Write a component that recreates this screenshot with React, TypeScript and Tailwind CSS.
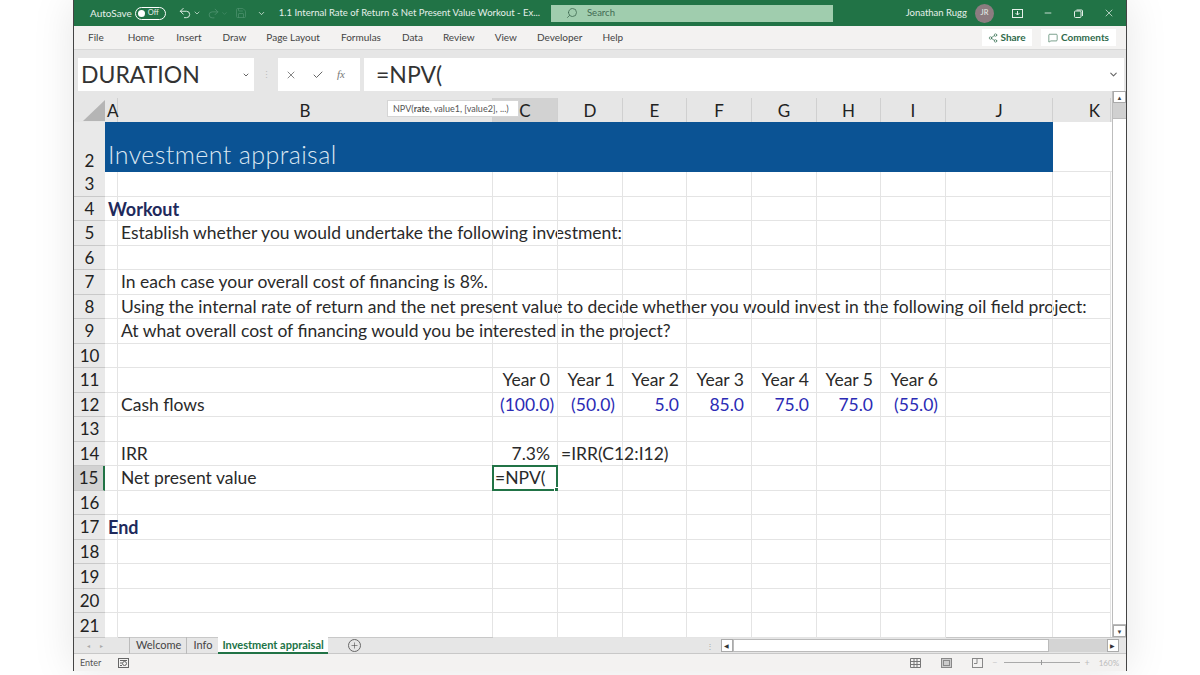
import { Check, ChevronDown, MessageSquare, Minus, Plus, Redo2, Save, Search, Share2, Undo2, X } from "lucide-react";

const font = "font-['Lato','Liberation_Sans',sans-serif]";

const columns = [
  { label: "A", width: "w-[13px]", text: "justify-start pl-[2px]" },
  { label: "B", width: "w-[375px]", text: "justify-center" },
  { label: "C", width: "w-[65px]", text: "justify-center" },
  { label: "D", width: "w-[65px]", text: "justify-center" },
  { label: "E", width: "w-[64px]", text: "justify-center" },
  { label: "F", width: "w-[65px]", text: "justify-center" },
  { label: "G", width: "w-[65px]", text: "justify-center" },
  { label: "H", width: "w-[64px]", text: "justify-center" },
  { label: "I", width: "w-[65px]", text: "justify-center" },
  { label: "J", width: "w-[107px]", text: "justify-center" },
  { label: "K", width: "w-[58px]", text: "justify-end pr-[10px]" },
];

const years = ["Year 0", "Year 1", "Year 2", "Year 3", "Year 4", "Year 5", "Year 6"];
const flows = ["(100.0)", "(50.0)", "5.0", "85.0", "75.0", "75.0", "(55.0)"];

type RowData = { n: number; a?: string; b?: string; active?: boolean; cells?: string[]; blue?: boolean; extra?: React.ReactNode };

const rows: RowData[] = [
  { n: 3 },
  { n: 4, a: "Workout" },
  { n: 5, b: "Establish whether you would undertake the following investment:" },
  { n: 6 },
  { n: 7, b: "In each case your overall cost of financing is 8%." },
  { n: 8, b: "Using the internal rate of return and the net present value to decide whether you would invest in the following oil field project:" },
  { n: 9, b: "At what overall cost of financing would you be interested in the project?" },
  { n: 10 },
  { n: 11, cells: years },
  { n: 12, b: "Cash flows", cells: flows, blue: true },
  { n: 13 },
  { n: 14, b: "IRR", cells: ["7.3%"], extra: "=IRR(C12:I12)" },
  { n: 15, b: "Net present value", active: true },
  { n: 16 },
  { n: 17, a: "End" },
  { n: 18 },
  { n: 19 },
  { n: 20 },
  { n: 21 },
];

const widths = ["w-[65px]", "w-[65px]", "w-[64px]", "w-[65px]", "w-[65px]", "w-[64px]", "w-[65px]"];

function SheetRow({ row }: { row: RowData }) {
  return (
    <div className="flex h-[24.53px] shrink-0">
      <div className={`w-[31px] shrink-0 border-b border-[#c9c9c9] flex items-center justify-center text-[17px] leading-none text-[#222] ${row.active ? "bg-[#d2d2d2] border-r-2 border-r-[#217346]" : "bg-[#e9e9e9]"}`}>
        {row.n}
      </div>
      <div className="w-[13px] shrink-0 border-r border-b border-[#e4e4e4] relative">
        {row.a && <span className="absolute left-[3px] top-[1px] whitespace-nowrap text-[18px] font-bold leading-[22px] text-[#1f2a5c]">{row.a}</span>}
      </div>
      <div className="w-[375px] shrink-0 border-r border-b border-[#e4e4e4] px-[3px] text-[17.5px] leading-[23px] whitespace-nowrap text-[#2a2a2a]">
        {row.b}
      </div>
      {widths.map((w, i) => (
        <div key={i} className={`${w} shrink-0 border-r border-b border-[#e4e4e4] px-[7px] text-right text-[17.5px] leading-[23px] whitespace-nowrap ${row.blue ? "text-[#2b2bb5]" : "text-[#2a2a2a]"} relative`}>
          {row.cells?.[i]}
          {i === 1 && row.extra && <span className="absolute left-[3px] top-0">{row.extra}</span>}
          {i === 0 && row.active && (
            <div className="absolute -left-[1px] -top-[1px] w-[66px] h-[26px] border-2 border-[#217346] bg-white text-left text-[17.5px] leading-[22px] text-[#2a2a2a] pl-[1px]">
              =NPV(
              <span className="absolute -right-[3px] -bottom-[3px] w-[5px] h-[5px] bg-[#217346] border border-white" />
            </div>
          )}
        </div>
      ))}
      <div className="w-[107px] shrink-0 border-r border-b border-[#e4e4e4]" />
      <div className="w-[58px] shrink-0 border-r border-b border-[#e4e4e4]" />
    </div>
  );
}

function TitleBar() {
  return (
    <div className="h-[26px] shrink-0 bg-[#217346] flex items-center text-[#e6f0ea] text-[9.5px] pl-[16px]">
      <span className="text-[10px]">AutoSave</span>
      <span className="ml-[3px] w-[31px] h-[13px] rounded-full border border-white flex items-center pl-[2px] gap-[3px] text-[7.5px]">
        <span className="w-[7px] h-[7px] rounded-full bg-white" />
        Off
      </span>
      <Undo2 size={14} className="ml-[12px]" strokeWidth={1.6} />
      <ChevronDown size={8} className="ml-[1px]" />
      <Redo2 size={13} className="ml-[6px] text-[#4f9270]" strokeWidth={1.5} />
      <ChevronDown size={7} className="ml-[1px] text-[#4f9270]" />
      <Save size={12} className="ml-[7px] text-[#4f9270]" strokeWidth={1.4} />
      <ChevronDown size={9} className="ml-[10px]" />
      <span className="ml-[13px] whitespace-nowrap">1.1 Internal Rate of Return &amp; Net Present Value Workout  -  Ex...</span>
      <div className="ml-[11px] w-[282px] h-[17px] bg-[#a0cdae] flex items-center text-[#3f6a52] pl-[15px] gap-[9px]">
        <Search size={12} className="-scale-x-100" strokeWidth={1.6} />
        <span>Search</span>
      </div>
      <span className="ml-auto">Jonathan Rugg</span>
      <span className="ml-[8px] w-[19px] h-[19px] rounded-full bg-[#8c7c80] text-[7.5px] flex items-center justify-center">JR</span>
      <svg className="ml-[18px]" width="11" height="9" viewBox="0 0 11 9" fill="none" stroke="currentColor"><rect x="0.5" y="0.5" width="10" height="8" /><path d="M5.5 2v4M3.5 4l2 2 2-2" /></svg>
      <Minus size={10} className="ml-[20px]" />
      <svg className="ml-[21px]" width="9" height="9" viewBox="0 0 9 9" fill="none" stroke="currentColor"><rect x="0.5" y="2" width="6.5" height="6.5" rx="1" /><path d="M2.5 1h5a1 1 0 0 1 1 1v5" /></svg>
      <X size={12} className="ml-[20px] mr-[11px]" strokeWidth={1.4} />
    </div>
  );
}

function RibbonTabs() {
  const tabs = [
    ["File", "ml-[14px]"],
    ["Home", "ml-[24px]"],
    ["Insert", "ml-[22px]"],
    ["Draw", "ml-[21px]"],
    ["Page Layout", "ml-[20px]"],
    ["Formulas", "ml-[21px]"],
    ["Data", "ml-[21px]"],
    ["Review", "ml-[20px]"],
    ["View", "ml-[20px]"],
    ["Developer", "ml-[20px]"],
    ["Help", "ml-[20px]"],
  ];
  return (
    <div className="h-[24px] shrink-0 bg-[#f3f2f1] border-b border-[#d8d8d8] flex items-center text-[10px] text-[#444]">
      {tabs.map(([t, m]) => (
        <span key={t} className={m}>{t}</span>
      ))}
      <div className="ml-auto mr-[4px] h-[17px] w-[50px] bg-white flex items-center justify-center gap-[2px] text-[#2f6a4c] font-bold">
        <Share2 size={10} strokeWidth={1.5} /> Share
      </div>
      <div className="ml-[5px] mr-[10px] h-[17px] w-[75px] bg-white flex items-center justify-center gap-[3px] text-[#2f6a4c] font-bold">
        <MessageSquare size={10} strokeWidth={1.5} /> Comments
      </div>
    </div>
  );
}

function FormulaBar() {
  return (
    <div className="h-[41px] shrink-0 bg-[#e6e6e6] pt-[8px] flex pl-[4px]">
      <div className="w-[176px] h-[33px] bg-white flex items-center justify-between px-[3px] text-[23px] text-[#333] font-['Open_Sans','Liberation_Sans',sans-serif]">
        <span className={font}>DURATION</span>
        <ChevronDown size={8} strokeWidth={3} className="mr-[1px] text-[#666]" />
      </div>
      <div className="w-[24px] flex items-center justify-center text-[#bbb] text-[9px]">⋮</div>
      <div className="w-[82px] h-[33px] bg-white flex items-center pl-[7px] text-[#555]">
        <X size={12} strokeWidth={1.4} />
        <Check size={12} strokeWidth={1.8} className="ml-[15px]" />
        <span className="ml-[13px] italic text-[11px] font-['Liberation_Serif',serif] text-[#777]">fx</span>
      </div>
      <div className="ml-[4px] flex-1 h-[33px] mr-[2px] bg-white flex items-center pl-[12px] pr-[5px] text-[23px] text-[#333] justify-between">
        <span className="-mt-[1px]">=NPV(</span>
        <ChevronDown size={11} strokeWidth={2.4} className="text-[#666]" />
      </div>
    </div>
  );
}

function ColumnHeaders() {
  return (
    <div className="h-[31px] shrink-0 bg-[#e6e6e6] flex relative">
      <div className="w-[31px] shrink-0 relative">
        <svg className="absolute left-[9px] bottom-[1px]" width="22" height="21" viewBox="0 0 22 21"><path d="M22 0v21H0z" fill="#b5b5b5" /></svg>
      </div>
      {columns.map((c) => (
        <div key={c.label} className={`${c.width} shrink-0 h-[24px] mt-[7px] border-r border-[#d0d0d0] flex items-center text-[17px] leading-none text-[#222] ${c.text} ${c.label === "C" ? "bg-[#d2d2d2]" : ""}`}>
          {c.label}
        </div>
      ))}
      <div className="absolute left-[313px] top-[9px] w-[132px] h-[17px] bg-white border border-[#d5d5d5] flex items-center pl-[5px] text-[9px] whitespace-nowrap text-[#555]">
        NPV(<b>rate</b>, value1, [value2], ...)
      </div>
    </div>
  );
}

function Scrollbar() {
  return (
    <div className="w-[14px] shrink-0 bg-[#e6e6e6] border-l border-[#bdbdbd] flex flex-col">
      <div className="h-[12px] bg-white border border-[#aaa] flex items-center justify-center text-[6px] text-[#444]">▲</div>
      <div className="h-[15px] bg-[#d0d0d0]" />
      <div className="flex-1 bg-white border-y border-[#bbb]" />
      <div className="h-[12px] bg-white border border-[#aaa] flex items-center justify-center text-[6px] text-[#444]">▼</div>
    </div>
  );
}

function SheetTabs() {
  return (
    <div className="h-[17px] shrink-0 bg-[#e6e6e6] border-y border-[#c8c8c8] flex items-center text-[11px] text-[#444]">
      <div className="w-[55px] pl-[13px] text-[6px] text-[#aaa] flex gap-[10px]">
        <span>◂</span>
        <span>▸</span>
      </div>
      <span className="border-l border-[#bbb] pl-[6px] pr-[5px]">Welcome</span>
      <span className="border-l border-[#bbb] pl-[6px] pr-[6px]">Info</span>
      <span className="h-[17px] bg-white px-[4px] leading-[16px] font-bold text-[#217346] border-b-2 border-[#217346]">Investment appraisal</span>
      <span className="ml-[20px] w-[13px] h-[13px] rounded-full border border-[#666] flex items-center justify-center">
        <Plus size={9} strokeWidth={1.5} />
      </span>
      <span className="ml-[345px] text-[8px] text-[#aaa]">⋮</span>
      <div className="ml-[7px] w-[12px] h-[13px] bg-white border border-[#aaa] flex items-center justify-center text-[6px] text-[#333]">◀</div>
      <div className="w-[316px] h-[13px] bg-white border border-[#bbb]" />
      <div className="w-[58px] h-[13px] bg-[#d4d4d4]" />
      <div className="w-[12px] h-[13px] bg-white border border-[#aaa] flex items-center justify-center text-[6px] text-[#333]">▶</div>
    </div>
  );
}

function StatusBar() {
  return (
    <div className="h-[17px] shrink-0 bg-[#f3f2f1] flex items-center text-[9px] text-[#555] pl-[6px]">
      <span>Enter</span>
      <svg className="ml-[17px]" width="11" height="10" viewBox="0 0 11 10" fill="none" stroke="#666"><rect x="0.5" y="0.5" width="10" height="9" /><circle cx="6.5" cy="5.5" r="2" /><path d="M2 2.5h7M2 5h2M2 7.5h2" /></svg>
      <svg className="ml-[781px]" width="11" height="10" viewBox="0 0 11 10" fill="none" stroke="#777"><path d="M.5.5h10v9H.5zM.5 3.5h10M.5 6.5h10M4 .5v9M7 .5v9" /></svg>
      <svg className="ml-[20px]" width="11" height="10" viewBox="0 0 11 10" fill="#ccc" stroke="#888"><rect x="0.5" y="0.5" width="10" height="9" /><rect x="2.5" y="2.5" width="6" height="5" /></svg>
      <svg className="ml-[20px]" width="11" height="10" viewBox="0 0 11 10" fill="none" stroke="#888"><rect x="0.5" y="0.5" width="10" height="9" /><path d="M5 .5v5H2" /></svg>
      <span className="ml-[9px] text-[#ccc]">−</span>
      <div className="ml-[6px] w-[76px] h-px bg-[#aaa] relative">
        <span className="absolute left-[37px] -top-[2px] w-px h-[5px] bg-[#999]" />
      </div>
      <span className="ml-[5px] text-[#bbb]">+</span>
      <span className="ml-[9px] text-[#bbb] text-[8px]">160%</span>
    </div>
  );
}

export default function App() {
  return (
    <div className={`w-[1200px] h-[675px] bg-white overflow-hidden pl-[73px] ${font}`}>
      <div className="w-[1054px] h-[671px] flex flex-col border-x border-[#444] shadow-[0_0_40px_rgba(0,0,0,0.1)]">
        <TitleBar />
        <RibbonTabs />
        <FormulaBar />
        <div className="flex-1 min-h-0 flex">
          <div className="flex-1 min-w-0 flex flex-col">
            <ColumnHeaders />
            <div className="flex h-[50px] shrink-0">
              <div className="w-[31px] shrink-0 bg-[#e9e9e9] flex items-end justify-center pb-[3px] text-[17px] leading-none text-[#222]">2</div>
              <div className="w-[948px] shrink-0 bg-[#0b5394] flex items-end pl-[3px] pb-[1px] text-[25px] leading-[34px] tracking-[0.4px] text-[#dbe7f2] font-light">
                Investment appraisal
              </div>
              <div className="flex-1 border-b border-[#e4e4e4]" />
            </div>
            {rows.map((r) => (
              <SheetRow key={r.n} row={r} />
            ))}
          </div>
          <Scrollbar />
        </div>
        <SheetTabs />
        <StatusBar />
      </div>
    </div>
  );
}
